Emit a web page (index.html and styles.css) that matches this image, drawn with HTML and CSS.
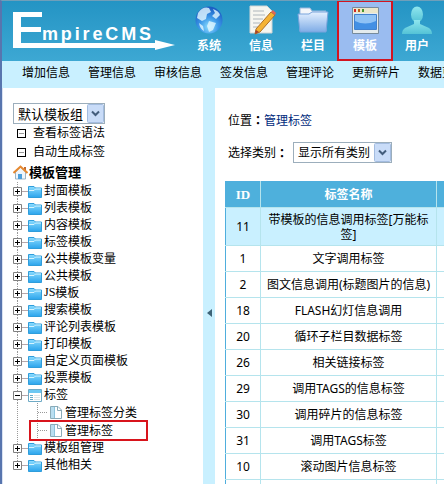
FILE: index.html
```html
<!DOCTYPE html>
<html lang="zh-CN">
<head>
<meta charset="utf-8">
<title>EmpireCMS</title>
<link rel="stylesheet" href="styles.css">
</head>
<body>
<svg class="defs" width="0" height="0" aria-hidden="true">
  <defs>
    <linearGradient id="fg" x1="0" y1="0" x2="0" y2="1"><stop offset="0" stop-color="#8bdcff"/><stop offset="1" stop-color="#2ba4ec"/></linearGradient>
    <linearGradient id="big" x1="0" y1="0" x2="0" y2="1"><stop offset="0" stop-color="#e4f0ff"/><stop offset="1" stop-color="#7eace6"/></linearGradient>
    <radialGradient id="globe" cx=".5" cy=".75" r=".7"><stop offset="0" stop-color="#8fe0ff"/><stop offset=".5" stop-color="#3c98e8"/><stop offset="1" stop-color="#1c5fc4"/></radialGradient>
    <linearGradient id="user" x1="0" y1="0" x2="0" y2="1"><stop offset="0" stop-color="#8fe6ee"/><stop offset="1" stop-color="#54c3d6"/></linearGradient>
    <symbol id="folder" viewBox="0 0 14 13"><path d="M.5 12.5V1.5H6L7.5 3H13.5V12.5Z" fill="url(#fg)" stroke="#2f9ddb"/><path d="M1 5.5H6L7.500 4H13" fill="none" stroke="#d5f4ff"/></symbol>
    <symbol id="plus" viewBox="0 0 9 9"><path d="M.5.5h8v8h-8z" fill="#fff" stroke="#808080"/><path d="M2 4.500h5M4.500 2v5" stroke="#000"/></symbol>
    <symbol id="minus" viewBox="0 0 9 9"><path d="M.5.5h8v8h-8z" fill="#fff" stroke="#808080"/><path d="M2 4.500h5" stroke="#000"/></symbol>
    <symbol id="page" viewBox="0 0 12 13"><path d="M.5.500H8L11.500 4V12.500H.5Z" fill="#fff" stroke="#8aabb8"/><path d="M1 1h3v11H1z" fill="#b9def0"/><path d="M4.500 1v11" stroke="#8cc3dc"/><path d="M7.500 1v3.500H11" fill="none" stroke="#8aabb8"/></symbol>
    <symbol id="arrow" viewBox="0 0 17 19"><rect x=".5" y=".5" width="16" height="18" rx="1" fill="#c9dcf8" stroke="#a3bce0"/><path d="M5 7.500l3.500 3.500L12 7.500" fill="none" stroke="#435d7c" stroke-width="2"/></symbol>
  </defs>
</svg>
<div class="app">
  <header class="header">
    <svg class="logo" width="180" height="60" viewBox="0 0 180 60">
      <path d="M13 11H42V16H21V26H41V31H21V42H155V39L175 44L155 49V47H13Z" fill="#fff"/>
      <text x="42" y="39" textLength="111" class="logo-text">mpireCMS</text>
    </svg>
    <nav class="modules">
      <a class="module"><svg width="30" height="32" viewBox="0 0 30 32"><circle cx="15" cy="16" r="13.500" fill="url(#globe)"/><path d="M4 9Q9 2 15 4L17 8L13 10L12 15L8 17L3 14ZM19 5Q25 7 26 11L22 15L18 12L21 9ZM15 17L22 19L19 26L15 28L13 22ZM5 19L9 22L10 27Q6 25 5 19Z" fill="#e4f8ff" opacity=".8"/></svg><span>系统</span></a>
      <a class="module"><svg width="30" height="32" viewBox="0 0 30 32"><path d="M4 2H21L26 7V29H4Z" fill="#f6f6f0" stroke="#d0d5d5"/><path d="M7 7h11M7 11h12M7 15h10M7 19h7M7 23h5" stroke="#aeb6bb"/><path d="M10 25L25 8L29 11L14 28L9 30Z" fill="#f5b333" stroke="#ac6f26"/><path d="M25 8L27 6L30 9L29 11Z" fill="#df6558"/><path d="M9 30l1-4 3 2z" fill="#a64130"/></svg><span>信息</span></a>
      <a class="module"><svg width="32" height="32" viewBox="0 0 32 32"><path d="M3 4H13L15 7H29V27H3Z" fill="#f3f6fa" stroke="#9ab7dd"/><path d="M1 10H12L15 8H31L29 28H3Z" fill="url(#big)" stroke="#79a4dc"/></svg><span>栏目</span></a>
      <a class="module active"><svg width="30" height="32" viewBox="0 0 30 32"><path d="M2.500 3.500h26v26h-26z" fill="#e4ebed" stroke="#768b9d"/><path d="M3 4h25v5H3z" fill="#ebe6c9"/><path d="M4 5h2v3H4z" fill="#d32424"/><path d="M8 5h2v3H8z" fill="#bb5c16"/><path d="M12 5h2v3h-2z" fill="#47962f"/><path d="M4.500 10.500h22v15h-22z" fill="#8fc2f5" stroke="#4282cf"/><path d="M5 17Q15 22 26 17V25H5Z" fill="#4390e4"/></svg><span>模板</span></a>
      <a class="module"><svg width="32" height="32" viewBox="0 0 32 32"><ellipse cx="16" cy="10.500" rx="6" ry="8" fill="url(#user)"/><path d="M13 16h6v4l9 4q3 2 3 6H1q0-4 3-6l9-4z" fill="url(#user)"/></svg><span>用户</span></a>
    </nav>
  </header>
  <nav class="submenu"><a>增加信息</a><a>管理信息</a><a>审核信息</a><a>签发信息</a><a>管理评论</a><a>更新碎片</a><a>数据更新</a></nav>
  <div class="body">
    <aside class="side">
      <div class="select group"><span>默认模板组</span><svg width="17" height="19"><use href="#arrow"/></svg></div>
      <div class="quick"><i></i>查看标签语法</div>
      <div class="quick"><i></i>自动生成标签</div>
      <div class="root"><svg width="15" height="15" viewBox="0 0 15 15"><path d="M2.500 7V14H12.500V7L7.500 2Z" fill="#eef5fb" stroke="#9cb4c4"/><path d="M11 2h2v4l-2-2z" fill="#c16a32"/><path d="M.5 8L7.500 1.500L14.500 8" fill="none" stroke="#e7892f" stroke-width="2"/><path d="M5 9h4v5H5z" fill="#4b9fdc"/></svg><b>模板管理</b></div>
      <div class="tree">
        <div class="node"><svg class="tog"><use href="#plus"/></svg><svg class="fold"><use href="#folder"/></svg>封面模板</div>
        <div class="node"><svg class="tog"><use href="#plus"/></svg><svg class="fold"><use href="#folder"/></svg>列表模板</div>
        <div class="node"><svg class="tog"><use href="#plus"/></svg><svg class="fold"><use href="#folder"/></svg>内容模板</div>
        <div class="node"><svg class="tog"><use href="#plus"/></svg><svg class="fold"><use href="#folder"/></svg>标签模板</div>
        <div class="node"><svg class="tog"><use href="#plus"/></svg><svg class="fold"><use href="#folder"/></svg>公共模板变量</div>
        <div class="node"><svg class="tog"><use href="#plus"/></svg><svg class="fold"><use href="#folder"/></svg>公共模板</div>
        <div class="node"><svg class="tog"><use href="#plus"/></svg><svg class="fold"><use href="#folder"/></svg><span class="js">JS</span>模板</div>
        <div class="node"><svg class="tog"><use href="#plus"/></svg><svg class="fold"><use href="#folder"/></svg>搜索模板</div>
        <div class="node"><svg class="tog"><use href="#plus"/></svg><svg class="fold"><use href="#folder"/></svg>评论列表模板</div>
        <div class="node"><svg class="tog"><use href="#plus"/></svg><svg class="fold"><use href="#folder"/></svg>打印模板</div>
        <div class="node"><svg class="tog"><use href="#plus"/></svg><svg class="fold"><use href="#folder"/></svg>自定义页面模板</div>
        <div class="node"><svg class="tog"><use href="#plus"/></svg><svg class="fold"><use href="#folder"/></svg>投票模板</div>
        <div class="node"><svg class="tog"><use href="#minus"/></svg><svg class="fold" viewBox="0 0 14 13"><path d="M.5.500h13v12H.5z" fill="#fff" stroke="#6faac5"/><path d="M1 1h12v3H1z" fill="#6cc8f3"/><path d="M2 6.500h3M2 8.500h3M2 10.500h3" stroke="#65abc9"/><path d="M6 6.500h6M6 8.500h6M6 10.500h6" stroke="#dce5e8"/></svg>标签</div>
        <div class="leaf"><svg class="doc"><use href="#page"/></svg>管理标签分类</div>
        <div class="leaf marked"><svg class="doc"><use href="#page"/></svg>管理标签</div>
        <div class="node"><svg class="tog"><use href="#plus"/></svg><svg class="fold"><use href="#folder"/></svg>模板组管理</div>
        <div class="node last"><svg class="tog"><use href="#plus"/></svg><svg class="fold"><use href="#folder"/></svg>其他相关</div>
      </div>
    </aside>
    <div class="splitter"><svg width="5" height="8" viewBox="0 0 5 8"><path d="M5 0v8L0 4z" fill="#3e6478"/></svg></div>
    <main class="main">
      <div class="crumb">位置<span class="colon" lang="zh-TW">：</span><a>管理标签</a></div>
      <div class="filter">选择类别<span class="colon" lang="zh-TW">：</span><div class="select kind"><span>显示所有类别</span><svg width="17" height="19"><use href="#arrow"/></svg></div></div>
      <table class="list">
        <colgroup><col class="c-id"><col class="c-name"><col class="c-rest"></colgroup>
        <tr><th>ID</th><th>标签名称</th><th></th></tr>
        <tr class="hover"><td>11</td><td>带模板的信息调用标签[万能标<br>签]</td><td></td></tr>
        <tr><td>1</td><td>文字调用标签</td><td></td></tr>
        <tr><td>2</td><td>图文信息调用(标题图片的信息)</td><td></td></tr>
        <tr><td>18</td><td>FLASH幻灯信息调用</td><td></td></tr>
        <tr><td>20</td><td>循环子栏目数据标签</td><td></td></tr>
        <tr><td>26</td><td>相关链接标签</td><td></td></tr>
        <tr><td>29</td><td>调用TAGS的信息标签</td><td></td></tr>
        <tr><td>30</td><td>调用碎片的信息标签</td><td></td></tr>
        <tr><td>31</td><td>调用TAGS标签</td><td></td></tr>
        <tr><td>10</td><td>滚动图片信息标签</td><td></td></tr>
        <tr><td></td><td></td><td></td></tr>
      </table>
    </main>
  </div>
</div>
</body>
</html>
```
FILE: styles.css
```css
* { box-sizing: border-box; }
html, body { margin: 0; height: 100%; overflow: hidden; }
body {
  font: 12px/16px "Noto Sans", "Noto Sans CJK SC", sans-serif;
  color: #000;
  background: #fff;
}
svg { display: block; flex: none; }
.defs { position: absolute; }
.app {
  width: 444px;
  height: 484px;
  overflow: hidden;
  display: flex;
  flex-direction: column;
  border-left: 2px solid #5875ae;
  border-top: 1px solid #6f9fba;
}
.header {
  height: 60px;
  flex: none;
  display: flex;
  background: linear-gradient(#2494c4, #3da8d3);
}
.logo { margin-left: -2px; }
.logo-text { font: bold 18px "Liberation Sans", sans-serif; fill: #fff; letter-spacing: 2px; }
.modules { display: flex; padding-left: 3px; }
.module {
  width: 52px;
  flex: none;
  display: flex;
  flex-direction: column;
  align-items: center;
  padding-top: 3px;
  color: #fff;
  font-weight: bold;
}
.module span { margin-top: 2px; }
.module.active {
  width: 56px;
  height: 61px;
  margin: -1px -2px 0;
  padding-top: 2px;
  border: 2px solid #d21420;
  background: #9abcf0;
}
.submenu {
  height: 27px;
  flex: none;
  display: flex;
  gap: 18px;
  padding: 4px 0 0 20px;
  background: #c9f0ff;
  white-space: nowrap;
}
.submenu a { flex: none; width: 48px; }
.body { flex: 1; display: flex; min-height: 0; }
.side {
  width: 201px;
  flex: none;
  padding: 15px 0 0 10px;
  border-left: 1px solid #d9e2f2;
}
.select {
  display: flex;
  align-items: center;
  justify-content: space-between;
  height: 21px;
  border: 1px solid #9caebc;
  background: #fff;
  padding-left: 4px;
}
.group { width: 92px; font-size: 13px; }
.quick { display: flex; align-items: center; height: 20px; }
.group + .quick { height: 18px; }
.quick i { width: 9px; height: 9px; border: 1px solid #000; margin: 0 7px 0 4px; background: linear-gradient(#999, #999) center / 5px 1px no-repeat; }
.root { display: flex; align-items: center; height: 20px; gap: 1px; font-size: 13px; }
.node { display: flex; align-items: center; height: 17px; background: linear-gradient(#b5a6aa, #b5a6aa) 9px 9px / 6px 1px no-repeat, repeating-linear-gradient(#999 0 1px, transparent 1px 2px) 4px 0 / 1px 100% no-repeat; }
.tree { line-height: 17px; }
.tog { width: 9px; height: 9px; margin-right: 6px; margin-top: 2px; }
.fold { width: 14px; height: 13px; margin-right: 2px; margin-top: 1px; }
.js { font-family: "Liberation Serif", serif; }
.leaf {
  display: flex;
  align-items: center;
  height: 18px;
  padding-left: 37px;
  background: repeating-linear-gradient(#999 0 1px, transparent 1px 2px) 4px 0 / 1px 100% no-repeat, repeating-linear-gradient(#999 0 1px, transparent 1px 2px) 24px 0 / 1px 100% no-repeat, repeating-linear-gradient(90deg, #999 0 1px, transparent 1px 2px) 25px 9px / 10px 1px no-repeat;
}
.doc { width: 12px; height: 13px; margin-right: 3px; }
.marked { position: relative; }
.marked::after { content: ""; position: absolute; box-sizing: border-box; left: 16px; top: -1px; width: 119px; height: 21px; border: 2px solid #d8141c; }
.last { background-size: 6px 1px, 1px 9px; }
.splitter {
  width: 12px;
  flex: none;
  display: flex;
  justify-content: center;
  padding-top: 221px;
  background: #c9f0ff;
}
.main { flex: 1; min-width: 0; padding: 25px 0 0 10px; overflow: hidden; }
.crumb { margin-left: 3px; height: 16px; }
.crumb a { color: #002a7c; }
.colon { display: inline-block; width: 12px; font-family: "Noto Sans CJK TC", sans-serif; font-weight: bold; line-height: 14px; }
.filter { display: flex; align-items: center; height: 21px; margin: 13px 0 18px 3px; }
.kind { width: 99px; margin-left: 5px; }
.list { width: 260px; table-layout: fixed; border-collapse: collapse; border: 1px solid #4faedd; }
.c-id { width: 35px; }
.c-name { width: 176px; }
.list td, .list th { height: 26px; padding: 0; text-align: center; border: 1px solid #b5e4ed; line-height: 15px; white-space: nowrap; }
.list td:first-child, .list th:first-child { border-left-color: #4faedd; }
.list th { background: #4eb0dc; color: #fff; border-top-color: #4faedd; }
.list th:first-child { font-family: "Liberation Serif", serif; font-size: 13px; }
.list .hover td { height: 38px; background: #c9f0ff; }
```
